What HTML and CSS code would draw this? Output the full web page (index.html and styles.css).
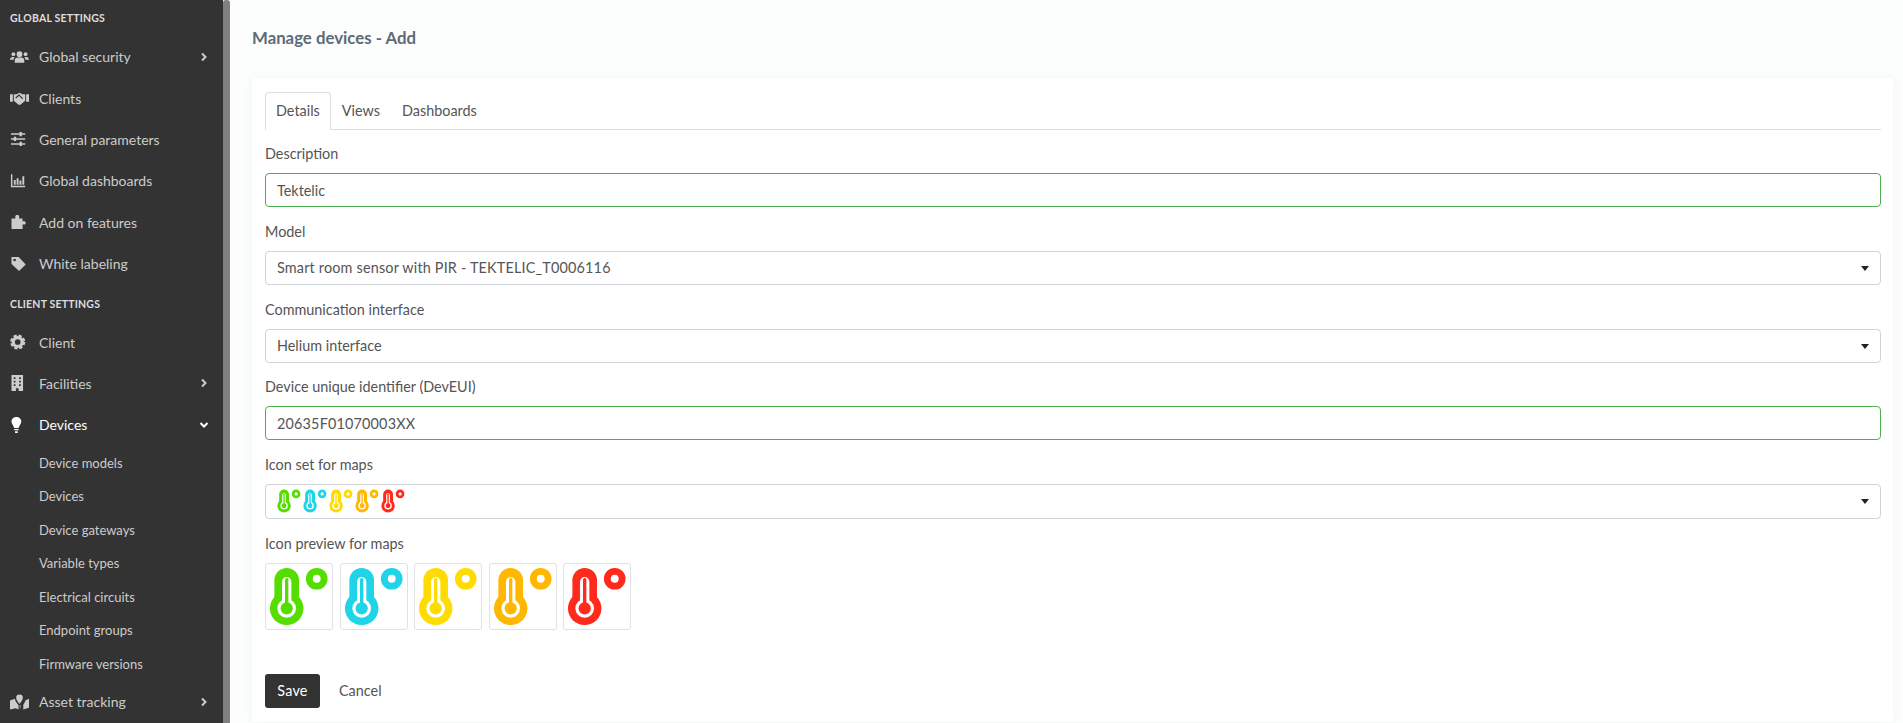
FILE: index.html
```html
<!DOCTYPE html>
<html lang="en">

<head>
  <meta charset="UTF-8">
  <title>Manage devices - Add</title>
  <link rel="stylesheet" href="styles.css">
</head>

<body>
  <svg class="defs" width="0" height="0">
    <symbol id="thermo" viewBox="0 0 66 66">
      <path d="M20.5 16.500V45" fill="none" stroke="currentColor" stroke-width="25" stroke-linecap="round" />
      <circle cx="20.500" cy="45" r="17" fill="currentColor" />
      <path d="M20.5 18V45" fill="none" stroke="#fff" stroke-width="9.500" stroke-linecap="round" />
      <circle cx="20.500" cy="45" r="9.500" fill="#fff" />
      <path d="M20.5 16V45" fill="none" stroke="currentColor" stroke-width="3.400" stroke-linecap="round" />
      <circle cx="20.500" cy="45" r="6.200" fill="currentColor" />
      <circle cx="51" cy="15" r="7.500" fill="none" stroke="currentColor" stroke-width="7" />
    </symbol>
    <symbol id="chev-right" viewBox="0 0 10 10">
      <path d="M3 1.5 6.5 5 3 8.5" fill="none" stroke="currentColor" stroke-width="2" />
    </symbol>
    <symbol id="chev-down" viewBox="0 0 10 10">
      <path d="M1.5 3 5 6.5 8.5 3" fill="none" stroke="currentColor" stroke-width="2" />
    </symbol>
  </svg>

  <aside class="sidebar">
    <div class="nav-title">Global settings</div>
    <a class="nav-item">
      <svg class="nav-icon" viewBox="0 0 20 16"><circle cx="10" cy="5" r="3" /><circle cx="3.6" cy="5" r="2" /><circle cx="16.4" cy="5" r="2" /><path d="M5 14v-2.500C5 9.500 6.500 8.500 8 8.500h4c1.500 0 3 1 3 3V14zM0 11c0-1.500 1-3 2.500-3H5C4 9 3.800 10 3.800 11zM20 11c0-1.500-1-3-2.500-3H15c1 1 1.200 2 1.200 3z" /></svg>
      <span>Global security</span>
      <svg class="chev"><use href="#chev-right" /></svg>
    </a>
    <a class="nav-item">
      <svg class="nav-icon" viewBox="0 0 20 16"><path d="M0 4h3v8H0zM17 4h3v8h-3zM4 4h3l3-1.500 3 1.500h3v7l-5 4H9l-5-4z" /><path d="M6 8l3.500-3 4 4" fill="none" stroke="#333" stroke-width="1.200" /></svg>
      <span>Clients</span>
    </a>
    <a class="nav-item">
      <svg class="nav-icon" viewBox="0 0 20 16"><path d="M1 2h15v1.600H1zM1 7.200h15v1.600H1zM1 12.400h15V14H1zM10 0.500h2.500v4.500H10zM4 5.700h2.500v4.500H4zM10 10.900h2.500v4.500H10z" /></svg>
      <span>General parameters</span>
    </a>
    <a class="nav-item">
      <svg class="nav-icon" viewBox="0 0 20 16"><path d="M1 1h1.500v12H16v1.500H1zM4 7h2v5H4zM7 5h2v7H7zM10 7.500h2V12h-2zM13 3h2v9h-2z" /></svg>
      <span>Global dashboards</span>
    </a>
    <a class="nav-item">
      <svg class="nav-icon" viewBox="0 0 20 18"><path d="M1 5h4.500C5 3 5 1 7.500 1s2.500 2 2 4H13.500v3.500c1.500-.7 3.500-.7 3.500 1.500s-2 2.200-3.500 1.500V17H1z" /></svg>
      <span>Add on features</span>
    </a>
    <a class="nav-item">
      <svg class="nav-icon" viewBox="0 0 20 18"><path fill-rule="evenodd" d="M1 1h8l8 8.500L9.500 17 1 9zM4.500 3A1.500 1.500 0 1 0 4.500 6 1.500 1.500 0 0 0 4.500 3z" /></svg>
      <span>White labeling</span>
    </a>

    <div class="nav-title nav-title-second">Client settings</div>
    <a class="nav-item">
      <svg class="nav-icon" viewBox="0 0 20 18"><circle cx="8" cy="9" r="5" fill="none" stroke="currentColor" stroke-width="3.600" /><circle cx="8" cy="9" r="7" fill="none" stroke="currentColor" stroke-width="3" stroke-dasharray="3.500 2" /></svg>
      <span>Client</span>
    </a>
    <a class="nav-item">
      <svg class="nav-icon" viewBox="0 0 20 18"><path fill-rule="evenodd" d="M1 0h13v18H9v-3H6v3H1zM3.500 2.500v2h2v-2zM9.500 2.500v2h2v-2zM3.500 6.500v2h2v-2zM9.500 6.500v2h2v-2zM3.500 10.500v2h2v-2zM9.500 10.500v2h2v-2z" /></svg>
      <span>Facilities</span>
      <svg class="chev"><use href="#chev-right" /></svg>
    </a>
    <a class="nav-item nav-item-open">
      <svg class="nav-icon" viewBox="0 0 20 18"><path d="M6.500 0C3 0 1 2.500 1 5c0 3 2.500 4.500 3 7.500h5C9.500 9.500 12 8 12 5c0-2.500-2-5-5.500-5zM4 13.500h5V15H4zM5 16h3v2H5z" /></svg>
      <span>Devices</span>
      <svg class="chev"><use href="#chev-down" /></svg>
    </a>
    <div class="subnav">
      <a>Device models</a>
      <a>Devices</a>
      <a>Device gateways</a>
      <a>Variable types</a>
      <a>Electrical circuits</a>
      <a>Endpoint groups</a>
      <a>Firmware versions</a>
    </div>
    <a class="nav-item">
      <svg class="nav-icon" viewBox="0 0 20 16"><path fill-rule="evenodd" d="M10 0a3.500 3.500 0 0 1 3.500 3.500C13.500 6 11 8.500 10 10 9 8.500 6.500 6 6.500 3.500A3.500 3.500 0 0 1 10 0zM0 6.500l5-2 1 3 3 4v4.500l-3-1.500L0 16zM20 4.500V14l-6 2v-5l2-3.500V6.500zM10 12l1-1v5z" /></svg>
      <span>Asset tracking</span>
      <svg class="chev"><use href="#chev-right" /></svg>
    </a>
  </aside>
  <div class="scrollbar"></div>

  <main class="content">
    <h1>Manage devices - Add</h1>

    <section class="card">
      <ul class="tabs">
        <li class="active">Details</li>
        <li>Views</li>
        <li>Dashboards</li>
      </ul>

      <div class="form-group">
        <label for="description">Description</label>
        <input class="field field-valid" type="text" id="description" value="Tektelic">
      </div>

      <div class="form-group">
        <label>Model</label>
        <div class="field select field-spaced">Smart room sensor with PIR - TEKTELIC_T0006116</div>
      </div>

      <div class="form-group">
        <label>Communication interface</label>
        <div class="field select">Helium interface</div>
      </div>

      <div class="form-group">
        <label for="devEui">Device unique identifier (DevEUI)</label>
        <input class="field field-valid field-spaced" type="text" id="devEui" value="20635F01070003XX">
      </div>

      <div class="form-group">
        <label>Icon set for maps</label>
        <div class="field select select-icons">
          <svg class="green"><use href="#thermo" /></svg>
          <svg class="blue"><use href="#thermo" /></svg>
          <svg class="yellow"><use href="#thermo" /></svg>
          <svg class="orange"><use href="#thermo" /></svg>
          <svg class="red"><use href="#thermo" /></svg>
        </div>
      </div>

      <div class="form-group">
        <label>Icon preview for maps</label>
        <div class="previews">
          <div class="preview green"><svg><use href="#thermo" /></svg></div>
          <div class="preview blue"><svg><use href="#thermo" /></svg></div>
          <div class="preview yellow"><svg><use href="#thermo" /></svg></div>
          <div class="preview orange"><svg><use href="#thermo" /></svg></div>
          <div class="preview red"><svg><use href="#thermo" /></svg></div>
        </div>
      </div>

      <div class="actions">
        <button class="btn-save">Save</button>
        <a class="btn-cancel">Cancel</a>
      </div>
    </section>
  </main>
</body>

</html>
```

FILE: styles.css
```css
* {
  box-sizing: border-box;
}

html,
body {
  height: 100%;
}

body {
  margin: 0;
  display: flex;
  height: 723px;
  overflow: hidden;
  font-family: Lato, "Open Sans", sans-serif;
  font-size: 14.4px;
  color: #555;
  background-color: #fcfdfd;
}

.defs {
  position: absolute;
}

/* sidebar */
.sidebar {
  flex: 0 0 223px;
  height: 723px;
  overflow: hidden;
  background-color: #333;
  color: #ccc;
  font-size: 14px;
  padding-top: 11px;
}

.scrollbar {
  flex: 0 0 7px;
  height: 723px;
  background-color: #808080;
  border-radius: 3px 3px 0 0;
}

.nav-title {
  font-size: 10.5px;
  line-height: 14px;
  font-weight: 700;
  letter-spacing: 0.2px;
  text-transform: uppercase;
  color: #ddd;
  padding-left: 10px;
  margin-bottom: 11px;
}

.nav-title-second {
  margin-top: 13px;
  margin-bottom: 10px;
}

.nav-item {
  display: flex;
  align-items: center;
  height: 41.4px;
  padding-left: 10px;
  padding-right: 14px;
}

.nav-item span {
  flex: 1;
}

.nav-item-open {
  color: #fff;
}

.nav-icon {
  width: 19px;
  height: 16px;
  margin-right: 10px;
  fill: currentColor;
}

.chev {
  width: 10px;
  height: 10px;
  color: #ccc;
}

.nav-item-open .chev {
  color: #fff;
}

.subnav {
  padding-top: 1px;
}

.subnav a {
  display: block;
  height: 33.5px;
  line-height: 33.5px;
  padding-left: 39px;
  font-size: 13px;
}

/* main area */
.content {
  flex: 1;
  min-width: 0;
  padding: 0 10px 0 22px;
}

h1 {
  margin: 0;
  padding-top: 28px;
  height: 78px;
  font-size: 16.8px;
  line-height: 20px;
  font-weight: 700;
  color: #5c6b78;
}

.card {
  background-color: #fff;
  border-radius: 4px 4px 0 0;
  box-shadow: 0 0 8px rgba(120, 140, 140, 0.08);
  padding: 14px 12px 14px 13px;
}

.tabs {
  display: flex;
  list-style: none;
  margin: 0 0 12px;
  padding: 0;
  height: 38px;
  border-bottom: 1px solid #ddd;
}

.tabs li {
  padding: 0 10px;
  line-height: 36px;
  height: 38px;
  border: 1px solid transparent;
  border-bottom: 0;
  border-radius: 4px 4px 0 0;
}

.tabs li.active {
  background-color: #fff;
  border-color: #ddd;
}

.form-group {
  margin-bottom: 12.75px;
}

label {
  display: block;
  line-height: 24px;
  margin-bottom: 7px;
}

.field {
  display: block;
  width: 100%;
  height: 34px;
  line-height: 32px;
  padding: 0 11px;
  border: 1px solid #ced4da;
  border-radius: 4px;
  background-color: #fff;
  color: #555;
  font-family: inherit;
  font-size: inherit;
}

.field-valid {
  border-color: #4caf50;
}

.field-spaced {
  letter-spacing: 0.18px;
}

.select {
  position: relative;
}

.select::after {
  content: "";
  position: absolute;
  right: 11px;
  top: 14px;
  border-top: 5px solid #222;
  border-left: 4px solid transparent;
  border-right: 4px solid transparent;
}

.select-icons {
  display: flex;
  height: 35px;
  padding: 3px 0 0 10px;
}

.select-icons svg {
  width: 26px;
  height: 26px;
}

.green {
  color: #55dd00;
}

.blue {
  color: #1fd3e8;
}

.yellow {
  color: #ffdc00;
}

.orange {
  color: #ffb700;
}

.red {
  color: #ff2a1c;
}

.previews {
  display: flex;
  gap: 6.5px;
}

.preview {
  width: 68px;
  height: 67px;
  border: 1px solid #dde2e6;
  border-radius: 3px;
}

.preview svg {
  display: block;
  width: 66px;
  height: 65px;
}

.actions {
  display: flex;
  align-items: center;
  margin-top: 44px;
}

.btn-save {
  width: 55px;
  height: 34px;
  border: 0;
  border-radius: 3px;
  background-color: #333;
  color: #fff;
  font-family: inherit;
  font-size: inherit;
  letter-spacing: 0.2px;
}

.btn-cancel {
  margin-left: 19px;
  color: #555;
}
```
